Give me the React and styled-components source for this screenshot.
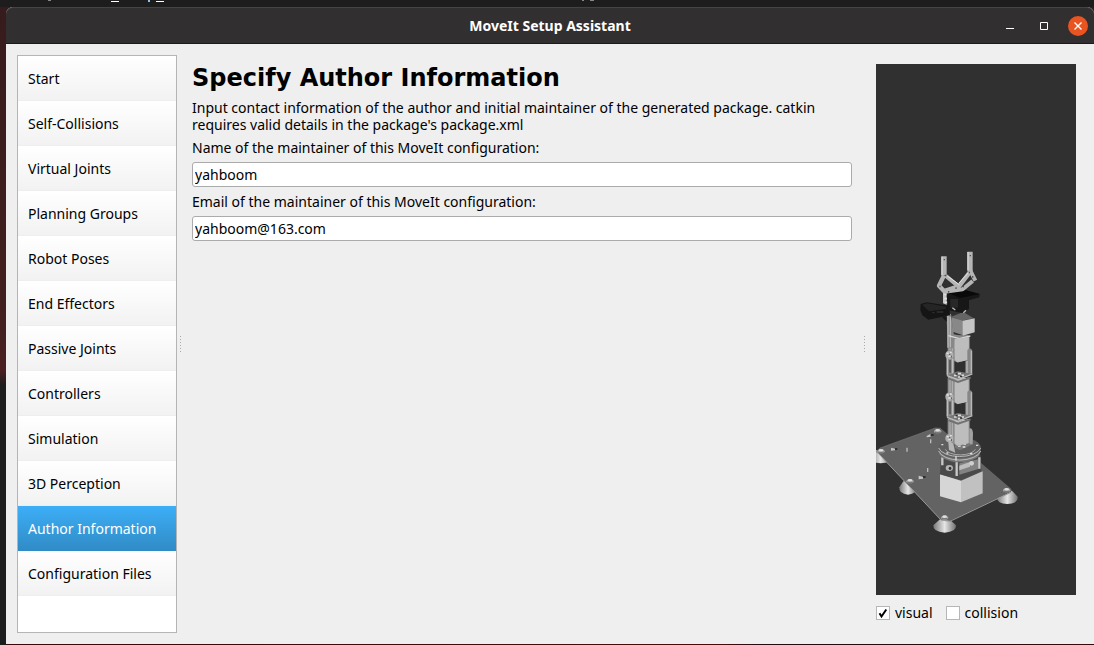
import React, { useState } from "react";
import styled, { createGlobalStyle } from "styled-components";

const GlobalStyle = createGlobalStyle`
  * {
    box-sizing: border-box;
  }
  body {
    margin: 0;
    color: #000;
    background: #1d1d1d;
    font: 14px/17px "Noto Sans", "Open Sans", sans-serif;
  }
  button, input {
    font: inherit;
    color: inherit;
  }
`;

const Desktop = styled.div`
  display: grid;
  grid-template-rows: 7px 1fr;
  min-height: 100vh;
  padding: 0 0 1px 6px;
  background:
    linear-gradient(90deg, #1d1d1d 6px, #3a0808 6px, #4a0a0a 66%, #220a10 70%, #3a0808) bottom / 100% 1px no-repeat,
    linear-gradient(#361b1d, #43201f 330px, #4c1f1f 370px, #1d1d1d 385px);
`;

const TopStrip = styled.div`
  margin-left: -6px;
  background: #1d1d1d;

  svg {
    display: block;
  }
`;

const Window = styled.main`
  display: flex;
  flex-direction: column;
  background: #efefef;
  border-radius: 7px 7px 0 0;
`;

const TitleBar = styled.header`
  display: grid;
  grid-template-columns: 1fr auto 1fr;
  align-items: center;
  height: 37px;
  padding: 0 6px;
  color: #fff;
  background: #322f30;
  border-top: 1px solid #454344;
  border-bottom: 1px solid #1c1a1b;
  border-radius: 7px 7px 0 0;
`;

const WindowTitle = styled.div`
  grid-column: 2;
  font-weight: 700;
`;

const WindowButtons = styled.div`
  display: flex;
  justify-content: flex-end;
  gap: 14px;
`;

const WindowButton = styled.button`
  display: grid;
  place-items: center;
  width: 20px;
  height: 20px;
  padding: 0;
  border: 0;
  border-radius: 50%;
  background: ${({ $close }) => ($close ? "#e95420" : "transparent")};
`;

const Body = styled.div`
  display: flex;
  flex: 1;
  padding: 11px 9px 11px 11px;
`;

const StepList = styled.nav`
  flex: 0 0 160px;
  background: #fff;
  border: 1px solid #b5b5b5;
`;

const Step = styled.button`
  display: block;
  width: 100%;
  height: 45px;
  padding: 0 10px;
  text-align: left;
  border: 0;
  border-bottom: 1px solid ${({ $active }) => ($active ? "#308cc6" : "#eee")};
  color: ${({ $active }) => ($active ? "#fff" : "#000")};
  background: ${({ $active }) =>
    $active ? "linear-gradient(#3daef7, #308cc6)" : "linear-gradient(#fff, #f2f2f2)"};
`;

const Splitter = styled.div`
  display: flex;
  align-items: center;
  justify-content: center;
  flex: 0 0 6px;

  &::before {
    content: "";
    width: 1px;
    height: 17px;
    background: repeating-linear-gradient(#a8a8a8 0 1px, transparent 1px 3px);
  }
`;

const Form = styled.form`
  display: flex;
  flex: 1;
  flex-direction: column;
  gap: 6px;
  min-width: 0;
  padding: 9px;
`;

const Heading = styled.h1`
  margin: 0;
  font: bold 24px/29px "DejaVu Sans", sans-serif;
`;

const Description = styled.p`
  margin: 0;
`;

const TextInput = styled.input`
  width: 100%;
  height: 25px;
  padding: 0 2px;
  background: #fff;
  border: 1px solid #ababab;
  border-radius: 3px;
  outline: none;
`;

const Preview = styled.aside`
  display: flex;
  flex: 0 0 218px;
  flex-direction: column;
  gap: 6px;
  padding: 9px;
`;

const Viewport = styled.div`
  display: flex;
  flex: 1;
  background: #303030;

  svg {
    width: 100%;
    height: auto;
  }
`;

const Toggles = styled.div`
  display: flex;
  align-items: center;
  gap: 13px;
  height: 23px;
`;

const Toggle = styled.label`
  display: flex;
  align-items: center;
  gap: 5px;
`;

const CheckBox = styled.input`
  width: 14px;
  height: 14px;
  margin: 0;
  appearance: none;
  background: #fff;
  border: 1px solid #b7b7b7;

  &:checked {
    background: #fff
      url("data:image/svg+xml,%3Csvg xmlns='http://www.w3.org/2000/svg' viewBox='0 0 12 12'%3E%3Cpath d='M2.5 6.2l2 3.3L9.3 2.5' fill='none' stroke='%23000' stroke-width='2'/%3E%3C/svg%3E");
  }
`;

const steps = [
  "Start",
  "Self-Collisions",
  "Virtual Joints",
  "Planning Groups",
  "Robot Poses",
  "End Effectors",
  "Passive Joints",
  "Controllers",
  "Simulation",
  "3D Perception",
  "Author Information",
  "Configuration Files",
];

// Suction foot under the base plate
function Foot({ x, y, r = 34 }) {
  return (
    <g transform={`translate(${x} ${y})`}>
      <path
        d={`M-14 -20 L${-r} -2 Q${-r - 2} 18 0 20 Q${r + 2} 18 ${r} -2 L14 -20Z`}
        fill="url(#foot)"
      />
    </g>
  );
}

function Screw({ x, y }) {
  return (
    <g transform={`translate(${x} ${y})`}>
      <ellipse rx="11" ry="6" fill="#a5a5a5" />
      <ellipse cy="-3" rx="7" ry="4" fill="#dedede" />
      <path d="M-8 3h16" stroke="#565656" strokeWidth="2" />
    </g>
  );
}

// One servo with the U bracket that hangs below it
function Segment({ y, bracket = true }) {
  return (
    <g transform={`translate(0 ${y})`}>
      <path d="M53 18 67 12 119 22 119 88 82 98 58 84 53 70Z" fill="#8d8d8d" />
      <path d="M60 22v58M67 23v62" stroke="#b4b4b4" strokeWidth="3" />
      <path d="M74 27 116 20 116 90 82 97 74 90Z" fill="#bdbdbd" />
      <path d="M55 18 74 26 117 19" fill="none" stroke="#d6d6d6" strokeWidth="3" />
      {bracket && (
        <>
          <path d="M76 95 84 99 106 94 106 126 76 130Z" fill="#303030" />
          <path d="M112 60 Q122 50 127 62L127 132 112 137 106 131 106 94 112 91Z" fill="#868686" />
          <path d="M124 62v68M111 92v38" stroke="#b9b9b9" strokeWidth="4" />
          <path d="M50 66 Q58 54 70 66L73 84 73 140 50 137Z" fill="#909090" />
          <path d="M52 80v54M68 86v50" stroke="#bdbdbd" strokeWidth="4" />
          <path d="M60 90v38" stroke="#555" strokeWidth="5" />
          <path d="M51 137 83 124 127 132 86 150Z" fill="#777" />
          <path d="M51 137 84 149 127 132" fill="none" stroke="#bdbdbd" strokeWidth="4" />
          <path d="M55 145 84 156 122 143" fill="none" stroke="#717171" strokeWidth="6" />
          <path d="M72 136h8M84 131h9M94 136h8M84 141h8" stroke="#dcdcdc" strokeWidth="5" />
          <path d="M77 132h5M90 139h6" stroke="#333" strokeWidth="4" />
        </>
      )}
      <circle cx="58" cy="75" r="12" fill="#b0b0b0" />
      <path d="M50 70h6M60 67h5M55 79h8" stroke="#e2e2e2" strokeWidth="4" />
      <path d="M57 73h4M64 77v6" stroke="#555" strokeWidth="3" />
    </g>
  );
}

function RobotArm() {
  return (
    <svg viewBox="0 0 600 1593" preserveAspectRatio="xMidYMin meet" aria-label="Robot model">
      <defs>
        <linearGradient id="foot">
          <stop offset="0" stopColor="#777" />
          <stop offset=".5" stopColor="#e6e6e6" />
          <stop offset="1" stopColor="#6f6f6f" />
        </linearGradient>
      </defs>

      {/* base plate */}
      <g transform="translate(-18 1068)">
        <Foot x="32" y="110" />
        <Foot x="114" y="204" r={26} />
        <Foot x="412" y="232" r={31} />
        <Foot x="224" y="318" />
        <path d="M18 93 28 85 196 24 212 25 424 207 423 216 240 303 213 300 24 99Z" fill="#636363" />
        <path d="M18 96 24 99 213 300 240 304 423 217" fill="none" stroke="#999" strokeWidth="3" />
        <path d="M28 85 196 24 212 25" fill="none" stroke="#777" strokeWidth="2" />
        <Screw x="33" y="94" />
        <Screw x="203" y="34" />
        <Screw x="120" y="184" />
        <Screw x="410" y="211" />
        <Screw x="224" y="293" />
        <path d="M63 83l12 3v5l-12 1zM146 167l13 4v5l-13 2zM170 48l12-7v9l-12 2z" fill="#c6c6c6" />
        <path d="M75 87h7M159 171h8M182 45h9" stroke="#222" strokeWidth="5" />
        <path d="M111 83v12M182 58v12M173 144v12" stroke="#bdbdbd" strokeWidth="4" />

        {/* turntable */}
        <path d="M207 160 270 140 338 153 274 182Z" fill="#555" />
        <path d="M210 163 273 182V247L210 229Z" fill="#d6d6d6" />
        <path d="M273 182 338 154V220L273 247Z" fill="#c1c1c1" />
        <path d="M213 105 332 105 334 154 273 180 210 163Z" fill="#4a4a4a" />
        <path d="M268 130 325 118V147L268 164Z" fill="#828282" />
        <path d="M268 137 300 126 300 140 268 151Z" fill="#bdbdbd" />
        <path d="M217 112v24M260 122v46M328 112v34" stroke="#c8c8c8" strokeWidth="7" />
        <ellipse cx="238" cy="144" rx="11" ry="9" fill="#b4b4b4" />
        <ellipse cx="240" cy="145" rx="4" ry="5" fill="#333" />
        <circle cx="305" cy="130" r="7" fill="#d0d0d0" />
        <ellipse cx="269" cy="94" rx="63" ry="33" fill="#777" />
        <ellipse cx="269" cy="84" rx="64" ry="32" fill="#5f5f5f" />
        <path d="M206 84A64 31 0 0 0 332 84M206 93A64 33 0 0 0 332 93" fill="none" stroke="#b9b9b9" strokeWidth="3" />
        <path d="M226 88A46 21 0 0 0 316 88" fill="none" stroke="#aaa" strokeWidth="3" />
        <path d="M214 74h6M229 99h6M258 108v14M318 76h7M300 101h7" stroke="#ddd" strokeWidth="4" />
        <path d="M233 44 248 62 256 98 237 90Z" fill="#b6b6b6" />
        <path d="M294 26 Q308 20 309 40L308 73 289 76Z" fill="#a1a1a1" />
        <path d="M256 71 292 62 304 75 270 91 254 83Z" fill="#777" />
        <path d="M264 78h8M280 72h8M278 81h8" stroke="#e7e7e7" strokeWidth="5" />
      </g>

      {/* arm segments */}
      <g transform="translate(162 798)">
        <Segment y={250} bracket={false} />
        <Segment y={125} />
        <Segment y={0} />
      </g>

      {/* wrist, camera and gripper */}
      <g transform="translate(72 528)">
        <path d="M139 218 153 222 162 287 205 285 207 292 164 300 162 325 144 325Z" fill="#888" />
        <path d="M144 223v100M151 230v92" stroke="#b8b8b8" strokeWidth="4" />
        <path d="M153 230 190 216 221 235 185 242Z" fill="#656565" />
        <path d="M155 232 189 242V286L158 275Z" fill="#888" />
        <path d="M188 242 224 235V277L188 287Z" fill="#c5c5c5" />
        <path d="M145 287 178 296 211 288" fill="none" stroke="#d8d8d8" strokeWidth="4" />
        <path d="M164 297 206 291V325H164Z" fill="#bdbdbd" />
        <path d="M62 192 80 187 148 197 150 226 85 239 67 226 61 210Z" fill="#151515" />
        <path d="M66 194 82 190 139 200 137 207 88 214Z" fill="#252525" />
        <path d="M97 218h6M110 216h20" stroke="#303030" strokeWidth="4" />
        <path d="M126 232 140 229V245Z" fill="#161616" />
        <path d="M129 155 140 152V194L129 190Z" fill="#c7c7c7" />
        <path d="M133 163h12M133 176h8M134 187h9" stroke="#e1e1e1" strokeWidth="5" />
        <path d="M140 160 184 147 239 162 238 172 207 181 207 207 187 219 143 210Z" fill="#171717" />
        <path d="M184 147 239 162 180 174 147 160Z" fill="#090909" />
        <path d="M151 177h23v26h-23z" fill="#282828" />
        <path d="M157 203l9 7M190 218l8-7" stroke="#bbb" strokeWidth="4" />
        <g fill="none" stroke="#b5b5b5" strokeLinejoin="round">
          <path d="M132 49V106M210 35V94" strokeWidth="16" />
          <path d="M132 106 117 137 132 153 178 138 213 92" strokeWidth="13" />
          <path d="M137 107 174 138M211 92 226 122M218 123 188 148 134 155" strokeWidth="12" />
          <path d="M142 108 178 134M176 130 207 96" stroke="#e4e4e4" strokeWidth="3" />
        </g>
        <path d="M126 50v56M204 36v55" stroke="#d8d8d8" strokeWidth="4" />
        <path d="M133 57v4M211 45v4M137 104v5M208 95v5M120 137v5M168 142v5M190 137v5M146 153v5M218 108v5" stroke="#555" strokeWidth="4" />
      </g>
    </svg>
  );
}

export default function App() {
  const [step, setStep] = useState("Author Information");

  return (
    <>
      <GlobalStyle />
      <Desktop>
        <TopStrip>
          <svg width="700" height="7" aria-hidden="true">
            <path d="M111 1.5h8M156 1.5h8" stroke="#fff" />
            <path d="M48 .5h3M582 .5h2M590 .5h4" stroke="#888" />
            <path d="M149 0v2" stroke="#8fc4e8" strokeWidth="2" />
          </svg>
        </TopStrip>
        <Window>
          <TitleBar>
            <WindowTitle>MoveIt Setup Assistant</WindowTitle>
            <WindowButtons>
              <WindowButton aria-label="Minimize">
                <svg width="10" height="10">
                  <path d="M1 7.5h8" stroke="#fff" />
                </svg>
              </WindowButton>
              <WindowButton aria-label="Maximize">
                <svg width="8" height="8">
                  <path d="M.5.5h7v7h-7z" fill="none" stroke="#fff" />
                </svg>
              </WindowButton>
              <WindowButton aria-label="Close" $close>
                <svg width="8" height="8">
                  <path d="M.5.5l7 7m0-7l-7 7" stroke="#fff" strokeWidth="1.4" />
                </svg>
              </WindowButton>
            </WindowButtons>
          </TitleBar>

          <Body>
            <StepList>
              {steps.map((name) => (
                <Step
                  key={name}
                  $active={name === step}
                  aria-current={name === step ? "step" : undefined}
                  onClick={() => setStep(name)}
                >
                  {name}
                </Step>
              ))}
            </StepList>
            <Splitter />
            <Form>
              <Heading>Specify Author Information</Heading>
              <Description>
                Input contact information of the author and initial maintainer of the generated
                package. catkin requires valid details in the package's package.xml
              </Description>
              <label htmlFor="name">Name of the maintainer of this MoveIt configuration:</label>
              <TextInput id="name" defaultValue="yahboom" />
              <label htmlFor="email">Email of the maintainer of this MoveIt configuration:</label>
              <TextInput id="email" defaultValue="yahboom@163.com" />
            </Form>
            <Splitter />
            <Preview>
              <Viewport>
                <RobotArm />
              </Viewport>
              <Toggles>
                <Toggle>
                  <CheckBox type="checkbox" defaultChecked />
                  visual
                </Toggle>
                <Toggle>
                  <CheckBox type="checkbox" />
                  collision
                </Toggle>
              </Toggles>
            </Preview>
          </Body>
        </Window>
      </Desktop>
    </>
  );
}
